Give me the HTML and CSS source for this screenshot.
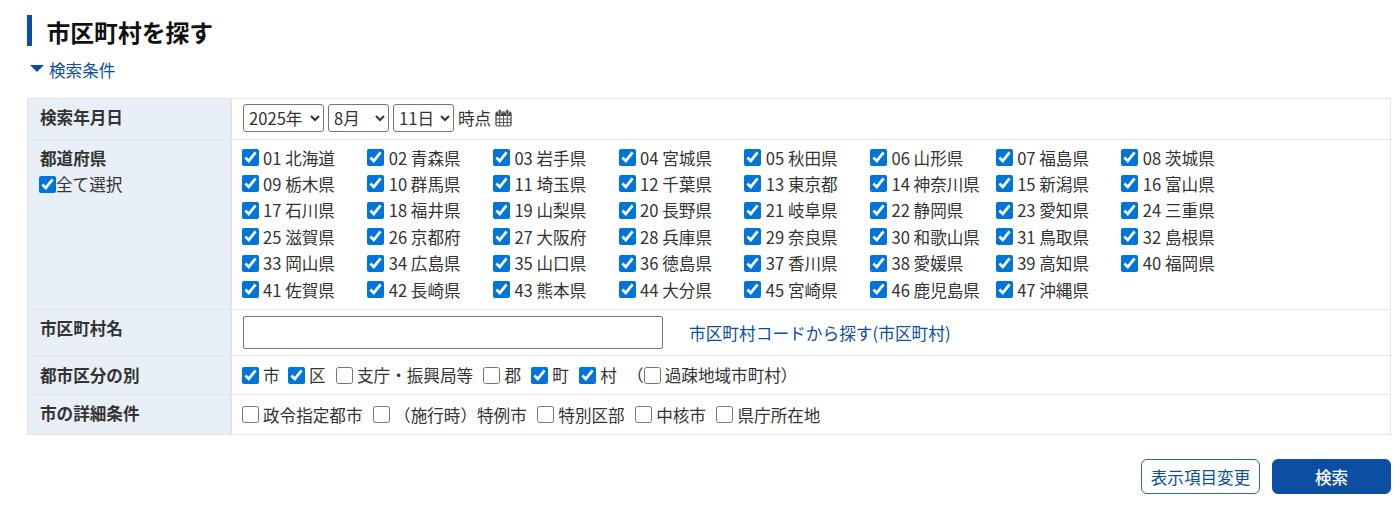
FILE: index.html
```html
<!DOCTYPE html>
<html lang="ja">
<head>
<meta charset="utf-8">
<title>市区町村を探す</title>
<link rel="stylesheet" href="styles.css">
</head>
<body>
<main class="page">
  <h1 class="title">市区町村を探す</h1>
  <a class="toggle" href="#"><span class="caret"></span>検索条件</a>
  <div class="form">
    <div class="row row-date">
      <div class="label">検索年月日</div>
      <div class="cell date">
        <select class="sel sel-y"><option>2025年</option></select>
        <select class="sel sel-m"><option>8月</option></select>
        <select class="sel sel-d"><option>11日</option></select>
        <span class="at">時点</span>
        <svg class="cal" width="17" height="18" viewBox="0 0 17 18"><rect x="1" y="3" width="15" height="14" rx="1.500" fill="none" stroke="#444" stroke-width="1.200"/><path fill="#444" d="M1 3.500h15v3.500h-15z"/><path fill="none" stroke="#555" stroke-width="1" d="M1 10h15M1 13.500h15M4.700 7v10M8.500 7v10M12.300 7v10"/><rect x="3.500" y="0.500" width="2.500" height="5" rx="1" fill="#444" stroke="#fff" stroke-width="0.500"/><rect x="11" y="0.500" width="2.500" height="5" rx="1" fill="#444" stroke="#fff" stroke-width="0.500"/></svg>
      </div>
    </div>
    <div class="row row-pref">
      <div class="label">都道府県
        <label class="all"><input type="checkbox" class="chk" checked>全て選択</label>
      </div>
      <div class="cell prefs">
        <label class="pref"><input type="checkbox" class="chk" checked>01 北海道</label>
        <label class="pref"><input type="checkbox" class="chk" checked>02 青森県</label>
        <label class="pref"><input type="checkbox" class="chk" checked>03 岩手県</label>
        <label class="pref"><input type="checkbox" class="chk" checked>04 宮城県</label>
        <label class="pref"><input type="checkbox" class="chk" checked>05 秋田県</label>
        <label class="pref"><input type="checkbox" class="chk" checked>06 山形県</label>
        <label class="pref"><input type="checkbox" class="chk" checked>07 福島県</label>
        <label class="pref"><input type="checkbox" class="chk" checked>08 茨城県</label>
        <label class="pref"><input type="checkbox" class="chk" checked>09 栃木県</label>
        <label class="pref"><input type="checkbox" class="chk" checked>10 群馬県</label>
        <label class="pref"><input type="checkbox" class="chk" checked>11 埼玉県</label>
        <label class="pref"><input type="checkbox" class="chk" checked>12 千葉県</label>
        <label class="pref"><input type="checkbox" class="chk" checked>13 東京都</label>
        <label class="pref"><input type="checkbox" class="chk" checked>14 神奈川県</label>
        <label class="pref"><input type="checkbox" class="chk" checked>15 新潟県</label>
        <label class="pref"><input type="checkbox" class="chk" checked>16 富山県</label>
        <label class="pref"><input type="checkbox" class="chk" checked>17 石川県</label>
        <label class="pref"><input type="checkbox" class="chk" checked>18 福井県</label>
        <label class="pref"><input type="checkbox" class="chk" checked>19 山梨県</label>
        <label class="pref"><input type="checkbox" class="chk" checked>20 長野県</label>
        <label class="pref"><input type="checkbox" class="chk" checked>21 岐阜県</label>
        <label class="pref"><input type="checkbox" class="chk" checked>22 静岡県</label>
        <label class="pref"><input type="checkbox" class="chk" checked>23 愛知県</label>
        <label class="pref"><input type="checkbox" class="chk" checked>24 三重県</label>
        <label class="pref"><input type="checkbox" class="chk" checked>25 滋賀県</label>
        <label class="pref"><input type="checkbox" class="chk" checked>26 京都府</label>
        <label class="pref"><input type="checkbox" class="chk" checked>27 大阪府</label>
        <label class="pref"><input type="checkbox" class="chk" checked>28 兵庫県</label>
        <label class="pref"><input type="checkbox" class="chk" checked>29 奈良県</label>
        <label class="pref"><input type="checkbox" class="chk" checked>30 和歌山県</label>
        <label class="pref"><input type="checkbox" class="chk" checked>31 鳥取県</label>
        <label class="pref"><input type="checkbox" class="chk" checked>32 島根県</label>
        <label class="pref"><input type="checkbox" class="chk" checked>33 岡山県</label>
        <label class="pref"><input type="checkbox" class="chk" checked>34 広島県</label>
        <label class="pref"><input type="checkbox" class="chk" checked>35 山口県</label>
        <label class="pref"><input type="checkbox" class="chk" checked>36 徳島県</label>
        <label class="pref"><input type="checkbox" class="chk" checked>37 香川県</label>
        <label class="pref"><input type="checkbox" class="chk" checked>38 愛媛県</label>
        <label class="pref"><input type="checkbox" class="chk" checked>39 高知県</label>
        <label class="pref"><input type="checkbox" class="chk" checked>40 福岡県</label>
        <label class="pref"><input type="checkbox" class="chk" checked>41 佐賀県</label>
        <label class="pref"><input type="checkbox" class="chk" checked>42 長崎県</label>
        <label class="pref"><input type="checkbox" class="chk" checked>43 熊本県</label>
        <label class="pref"><input type="checkbox" class="chk" checked>44 大分県</label>
        <label class="pref"><input type="checkbox" class="chk" checked>45 宮崎県</label>
        <label class="pref"><input type="checkbox" class="chk" checked>46 鹿児島県</label>
        <label class="pref"><input type="checkbox" class="chk" checked>47 沖縄県</label>
      </div>
    </div>
    <div class="row row-name">
      <div class="label">市区町村名</div>
      <div class="cell name">
        <input type="text" class="text">
        <a class="link" href="#">市区町村コードから探す(市区町村)</a>
      </div>
    </div>
    <div class="row row-kind">
      <div class="label">都市区分の別</div>
      <div class="cell opts">
        <label class="opt gap-first"><input type="checkbox" class="chk" checked><span class="pad">市</span></label>
        <label class="opt gap"><input type="checkbox" class="chk" checked><span class="pad">区</span></label>
        <label class="opt gap"><input type="checkbox" class="chk"><span class="pad">支庁・振興局等</span></label>
        <label class="opt gap"><input type="checkbox" class="chk"><span class="pad">郡</span></label>
        <label class="opt gap"><input type="checkbox" class="chk" checked><span class="pad">町</span></label>
        <label class="opt gap"><input type="checkbox" class="chk" checked><span class="pad">村</span></label>
        <label class="opt"><span>（</span><input type="checkbox" class="chk"><span class="pad">過疎地域市町村）</span></label>
      </div>
    </div>
    <div class="row row-detail">
      <div class="label">市の詳細条件</div>
      <div class="cell opts">
        <label class="opt gap-wide"><input type="checkbox" class="chk"><span class="pad">政令指定都市</span></label>
        <label class="opt gap-wide"><input type="checkbox" class="chk"><span class="pad">（施行時）特例市</span></label>
        <label class="opt gap-wide"><input type="checkbox" class="chk"><span class="pad">特別区部</span></label>
        <label class="opt gap-wide"><input type="checkbox" class="chk"><span class="pad">中核市</span></label>
        <label class="opt"><input type="checkbox" class="chk"><span class="pad">県庁所在地</span></label>
      </div>
    </div>
  </div>
  <div class="actions">
    <button type="button" class="btn btn-sub">表示項目変更</button>
    <button type="button" class="btn btn-main">検索</button>
  </div>
</main>
</body>
</html>
```
FILE: styles.css
```css
* { box-sizing: border-box; }
html, body { margin: 0; background: #fff; }
body {
  font-family: "Noto Sans CJK JP", "Noto Sans", sans-serif;
  font-size: 16.600px;
  color: #333;
  overflow: hidden;
}
.page { padding: 15px 9px 0 27px; }
.title {
  margin: 0;
  height: 31px;
  border-left: 5px solid #0b4ea2;
  padding-left: 14.500px;
  font-size: 23.800px;
  line-height: 33px;
  font-weight: 700;
  color: #111;
}
.toggle {
  display: flex;
  align-items: center;
  margin: 12px 0 0 3px;
  height: 24px;
  color: #0b4ea2;
  text-decoration: none;
}
.caret {
  width: 0;
  height: 0;
  margin: -3px 5px 0 0;
  border-left: 7px solid transparent;
  border-right: 7px solid transparent;
  border-top: 7px solid #0b4ea2;
}
.form {
  margin-top: 16px;
  border: 1px solid #e4e4e4;
}
.row {
  display: flex;
  border-bottom: 1px solid #e4e4e4;
}
.row:last-child { border-bottom: 0; }
.row-date { height: 41px; }
.row-pref { height: 170px; }
.row-name { height: 46px; }
.row-kind { height: 39px; }
.row-detail { height: 39px; }
.label {
  flex: 0 0 204px;
  padding: 5px 0 0 12px;
  background: #e8eff7;
  border-right: 2px solid #e4e4e4;
  font-weight: 700;
  line-height: 26px;
}
.row-kind .label { padding-top: 6px; }
.all {
  display: flex;
  align-items: center;
  margin-left: -1px;
  font-weight: 400;
  height: 26px;
}
.cell { flex: 1; min-width: 0; }
.chk {
  width: 17px;
  height: 17px;
  margin: 0;
  flex: none;
  accent-color: #0075d9;
}
.date {
  display: flex;
  align-items: center;
  padding: 0 0 2px 11px;
  gap: 4px;
}
.sel {
  height: 28px;
  padding: 0 0 0 1px;
  border: 1px solid #767676;
  border-radius: 3px;
  background-color: #fff;
  color: #333;
  font: inherit;
}
.sel-y { width: 81px; }
.sel-m { width: 61px; }
.sel-d { width: 61px; }
.cal { display: block; }
.prefs {
  display: flex;
  flex-wrap: wrap;
  align-content: flex-start;
  padding: 4.400px 0 0 9.500px;
  width: 1016px;
  flex: none;
}
.pref {
  display: flex;
  align-items: center;
  width: 125.700px;
  height: 26.400px;
  gap: 4.500px;
  white-space: nowrap;
}
.name {
  display: flex;
  align-items: center;
  padding-left: 11px;
}
.text {
  width: 420px;
  height: 33px;
  border: 1px solid #767676;
  border-radius: 2px;
  background: #fff;
}
.link {
  margin-left: 26px;
  color: #0b4ea2;
  font-size: 16.700px;
  text-decoration: none;
}
.opts {
  display: flex;
  align-items: center;
  padding-left: 10px;
}
.opt { display: flex; align-items: center; white-space: nowrap; }
.pad { margin-left: 4px; }
.gap { margin-right: 10.300px; }
.gap-wide { margin-right: 10.500px; }
.gap-first { margin-right: 8.500px; }
.actions {
  display: flex;
  justify-content: flex-end;
  gap: 12px;
  margin-top: 24px;
}
.btn {
  width: 119px;
  height: 35px;
  border-radius: 6px;
  font-family: inherit;
  font-size: 16.600px;
  padding: 0;
  color: #0b4ea2;
}
.btn-sub {
  background: #fff;
  border: 1px solid #2f68ad;
}
.btn-main {
  background: #0b4ea2;
  border: 1px solid #0b4ea2;
  color: #fff;
  font-weight: 500;
}
```
